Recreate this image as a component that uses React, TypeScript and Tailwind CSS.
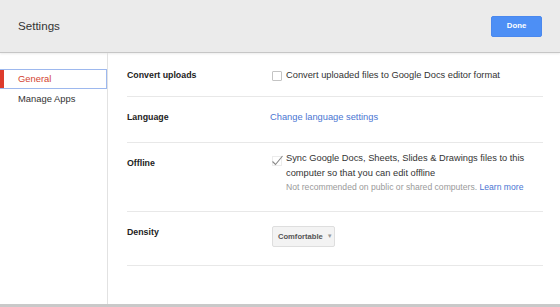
export default function App() {
  return (
    <div className="w-[560px] h-[307px] bg-white flex flex-col overflow-hidden font-['Liberation_Sans',Arial,sans-serif] text-[#222]">
      <header className="h-[53px] shrink-0 bg-[#ebebeb] border-b border-[#c6c6c6] shadow-[0_1px_2px_rgba(0,0,0,0.08)] flex items-center justify-between pl-[18px] pr-[18px]">
        <span className="text-[11.6px] text-[#333] leading-none">Settings</span>
        <button className="w-[51px] h-[21px] bg-[#4d8ff5] border border-[#4a88ee] rounded-[2px] text-white text-[7.8px] font-bold">
          Done
        </button>
      </header>

      <div className="flex flex-1 border-b-[3px] border-[#c9c9c9]">
        <aside className="w-[108px] shrink-0 border-r border-[#e2e2e2] pt-[16px]">
          <div className="relative h-[20px] border border-[#9db8ee] flex items-center pl-[17px] text-[9.4px] text-[#d23f31] font-medium">
            <span className="absolute left-[-1px] top-0 bottom-0 w-[4px] bg-[#dd3b2c]" />
            General
          </div>
          <div className="h-[20px] flex items-center pl-[18px] text-[9.4px] text-[#333]">Manage Apps</div>
        </aside>

        <main className="flex-1 pl-[19px] pr-[17px]">
          <div className="h-[44px] flex border-b border-[#e8e8e8]">
            <div className="w-[143px] pt-[15px] text-[8.8px] font-bold leading-[14px]">Convert uploads</div>
            <div className="pt-[15px] flex items-start leading-[14px]">
              <span className="mt-[3px] ml-[2px] w-[10px] h-[10px] border border-[#c4c4c4] rounded-[1px] bg-white" />
              <span className="ml-[4px] text-[9.3px] text-[#333]">Convert uploaded files to Google Docs editor format</span>
            </div>
          </div>

          <div className="h-[46px] flex border-b border-[#e8e8e8]">
            <div className="w-[143px] pt-[13px] text-[8.8px] font-bold leading-[14px]">Language</div>
            <div className="pt-[13px] leading-[14px] text-[9.3px] text-[#4a75d2]">Change language settings</div>
          </div>

          <div className="h-[69px] flex border-b border-[#e8e8e8]">
            <div className="w-[143px] pt-[13px] text-[8.8px] font-bold leading-[14px]">Offline</div>
            <div className="pt-[8px] flex items-start">
              <svg width="12" height="11" viewBox="0 0 12 11" className="mt-[4px] ml-[1px] shrink-0">
                <rect x="1.5" y="1.5" width="9" height="9" fill="none" stroke="#ececec" strokeWidth="1" />
                <path d="M1.5 6.5 L4.5 9.5 L11.5 1" fill="none" stroke="#888" strokeWidth="1.1" />
              </svg>
              <div className="ml-[3px] w-[245px]">
                <div className="text-[9.3px] leading-[14.5px] text-[#333]">
                  Sync Google Docs, Sheets, Slides &amp; Drawings files to this computer so that you can edit offline
                </div>
                <div className="text-[8.6px] leading-[15px] text-[#9a9a9a] whitespace-nowrap">
                  Not recommended on public or shared computers. <span className="text-[#4a75d2]">Learn more</span>
                </div>
              </div>
            </div>
          </div>

          <div className="h-[54px] flex border-b border-[#e8e8e8]">
            <div className="w-[143px] pt-[13px] text-[8.8px] font-bold leading-[14px]">Density</div>
            <div className="pt-[14px] pl-[2px]">
              <div className="w-[63px] h-[21px] bg-[#f3f3f3] border border-[#dedede] rounded-[2px] flex items-center pl-[5px] text-[7.6px] font-bold text-[#555]">
                Comfortable
                <span className="ml-[4px] text-[6px] text-[#999]">▼</span>
              </div>
            </div>
          </div>
        </main>
      </div>
    </div>
  )
}
